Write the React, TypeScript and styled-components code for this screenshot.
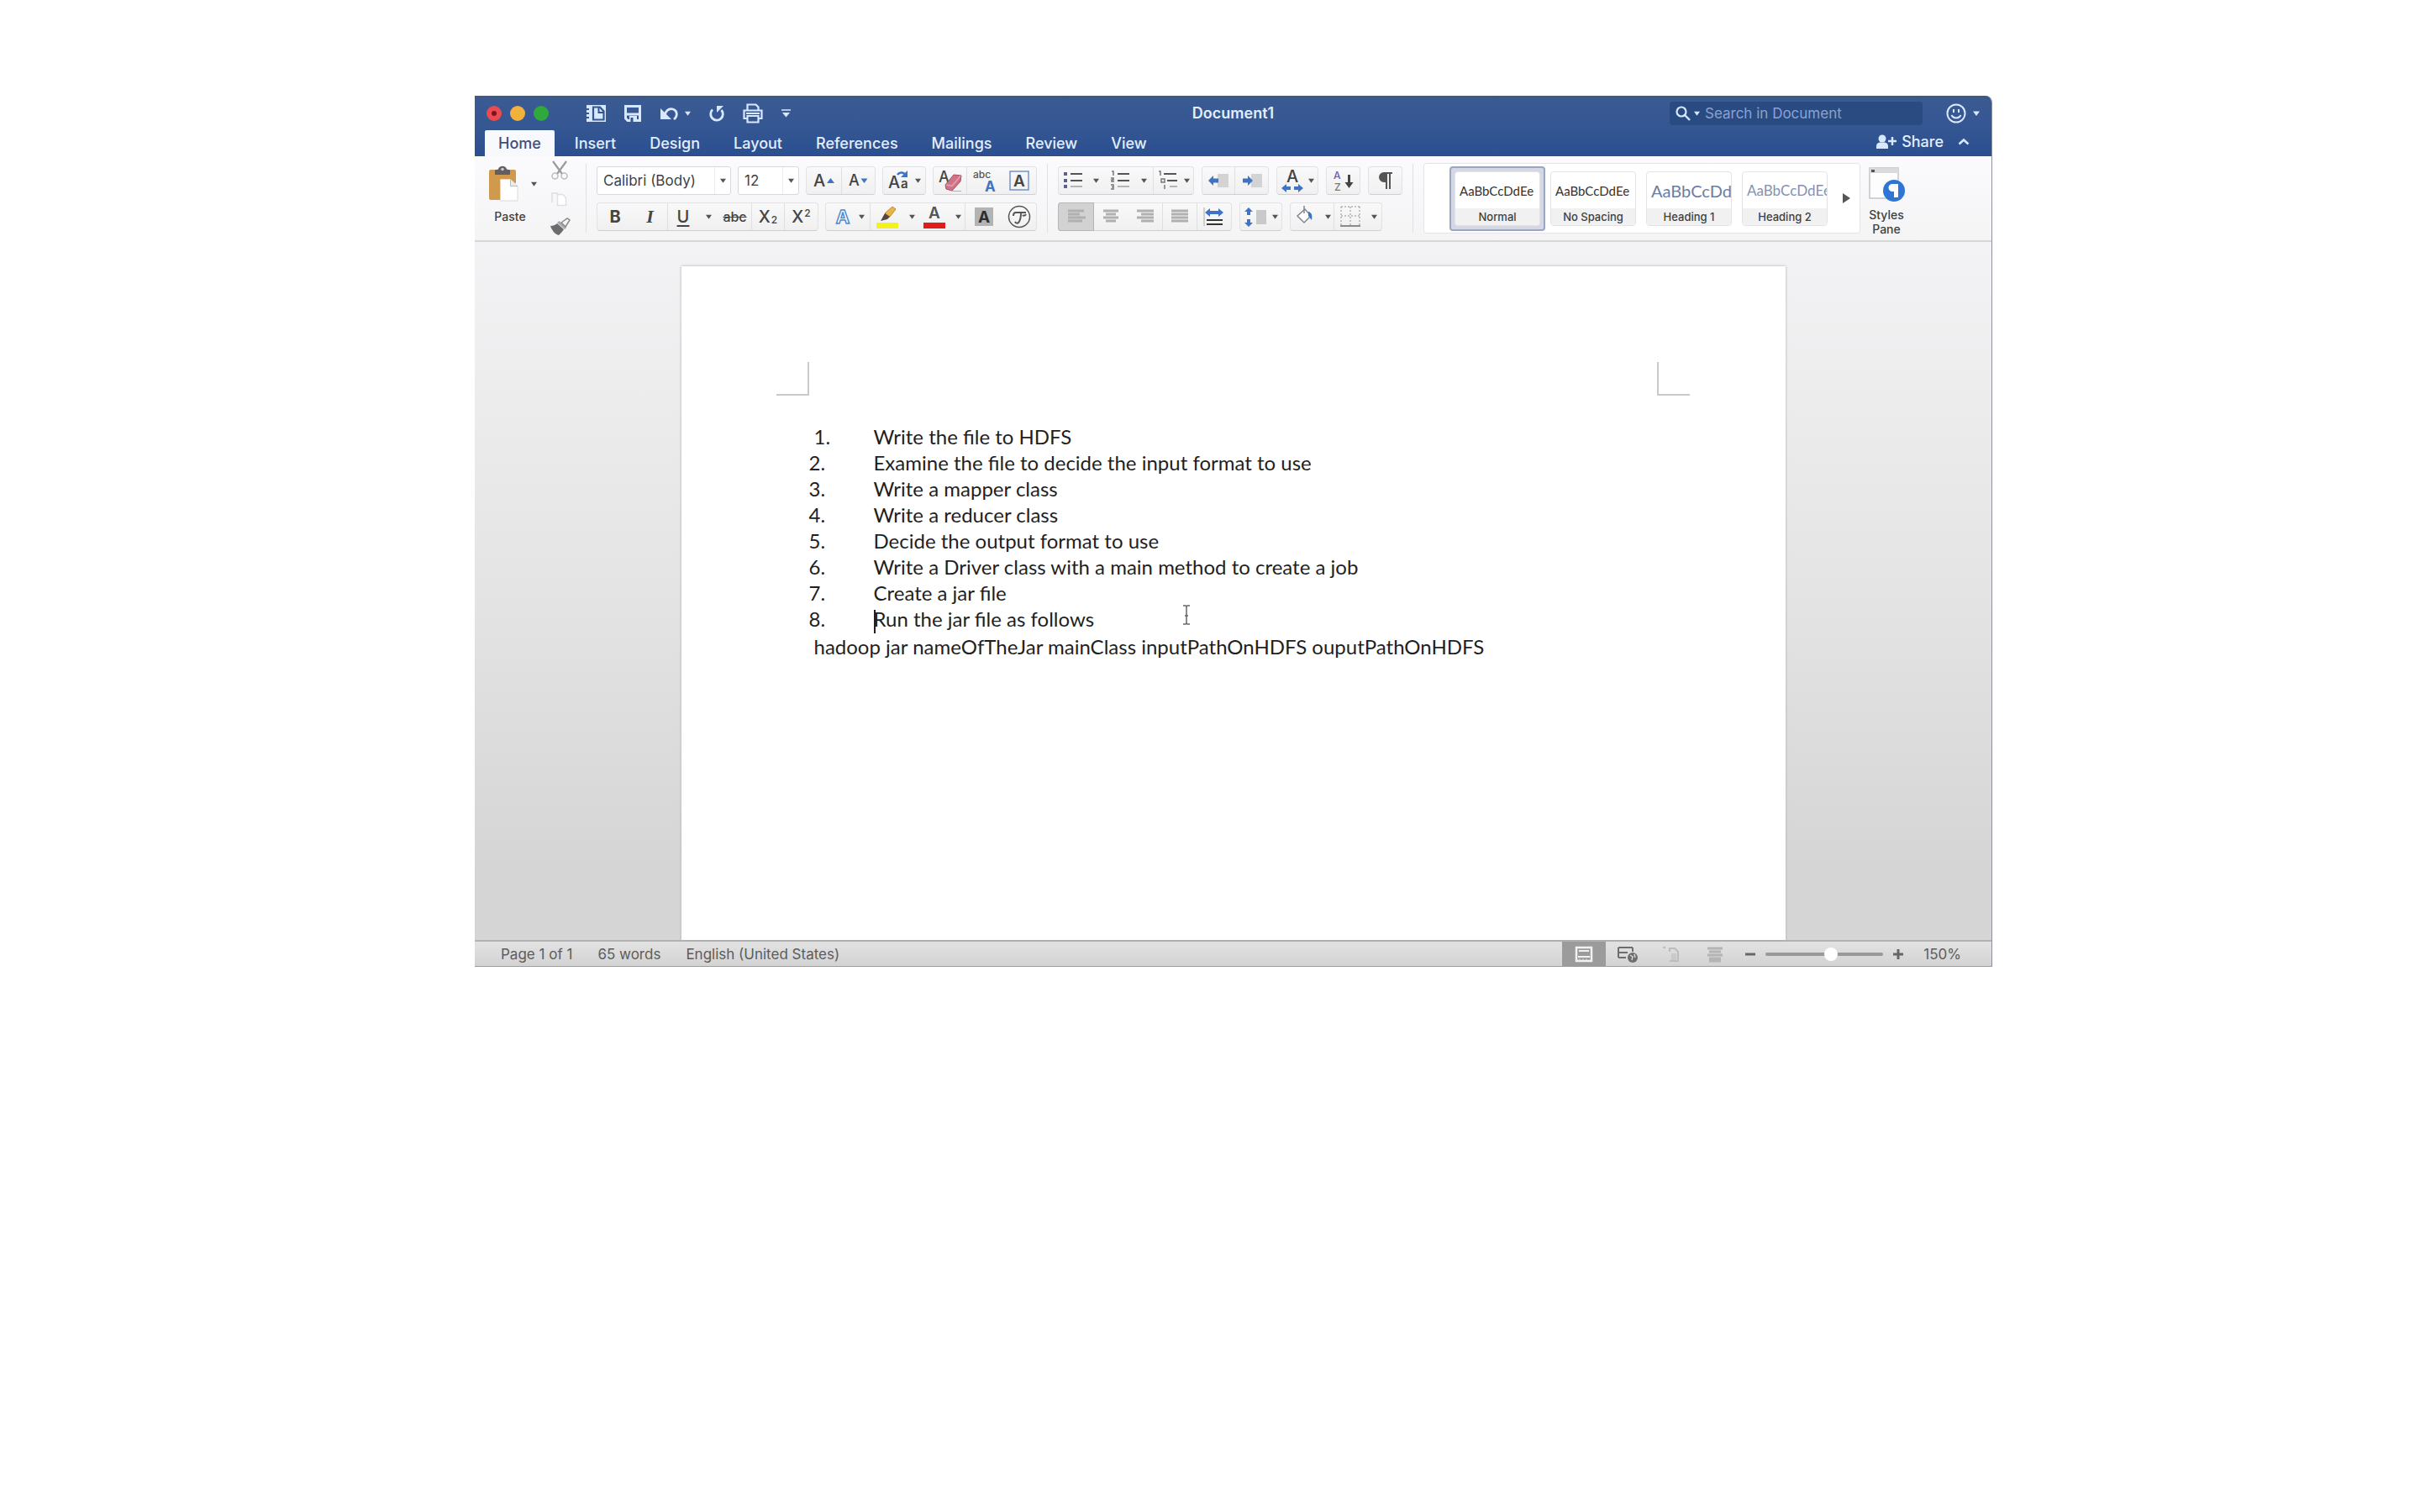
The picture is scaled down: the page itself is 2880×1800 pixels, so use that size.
import React from "react";
import styled, { createGlobalStyle, css } from "styled-components";

const ui = `Inter, "Liberation Sans", sans-serif`;
const body = `Lato, "Open Sans", sans-serif`;

const GlobalStyle = createGlobalStyle`
  * { box-sizing: border-box; }
  body { margin: 0; background: #fff; font-family: ${ui}; color: #3f3f3f; }
  button, input, select { font: inherit; color: inherit; margin: 0; padding: 0; border: 0; background: none; }
  svg { display: block; flex: none; overflow: visible; }
`;

const Desktop = styled.main`
  padding: 114px 509px 40px 565px;
`;

const Window = styled.section`
  display: flex;
  flex-direction: column;
  border-right: 1px solid #8d929b;
  border-top-right-radius: 8px;
  overflow: hidden;
`;

/* ---------- header ---------- */

const Header = styled.header`
  background: linear-gradient(#47576f 0, #3a5a93 4px, #345692 40px, #2a4e90 100%);
  color: #e3efff;
`;

const TitleRow = styled.div`
  display: grid;
  grid-template-columns: 1fr auto 1fr;
  align-items: center;
  height: 41px;
  padding: 0 14px;
`;

const Tools = styled.div<{ $gap: number; $end?: boolean }>`
  display: flex;
  align-items: center;
  gap: ${(p) => p.$gap}px;
  justify-content: ${(p) => (p.$end ? "flex-end" : "flex-start")};
`;

const Lights = styled.div`
  display: flex;
  gap: 10px;
  margin-right: 22px;
`;

const Light = styled.button<{ $color: string }>`
  display: grid;
  place-items: center;
  width: 18px;
  height: 18px;
  border-radius: 50%;
  background: ${(p) => p.$color};
`;

const LightDot = styled.span`
  width: 6px;
  height: 6px;
  border-radius: 50%;
  background: #7c1420;
`;

const GlyphButton = styled.button`
  display: flex;
  align-items: center;
  gap: 8px;
`;

const WindowTitle = styled.h1`
  margin: 0;
  font-size: 18px;
  line-height: 24px;
  font-weight: 600;
`;

const Search = styled.label`
  display: flex;
  align-items: center;
  gap: 4px;
  width: 301px;
  height: 28px;
  padding-left: 7px;
  border-radius: 4px;
  background: #2a4a82;
`;

const SearchInput = styled.input`
  flex: 1;
  min-width: 0;
  margin-left: 2px;
  outline: none;
  font-size: 17px;
  &::placeholder { color: #89a3d0; opacity: 1; }
`;

const TabRow = styled.nav`
  display: flex;
  align-items: stretch;
  height: 31px;
  gap: 8px;
  padding: 0 26px 0 12px;
`;

const Tab = styled.button<{ $active?: boolean }>`
  padding: 0 16px;
  font-size: 18px;
  line-height: 30px;
  font-weight: 500;
  ${(p) =>
    p.$active &&
    css`
      background: #f8f9fd;
      color: #3d4f80;
      border-radius: 2px 2px 0 0;
    `}
`;

const ShareArea = styled.div`
  display: flex;
  align-items: center;
  gap: 17px;
  margin-left: auto;
  padding-bottom: 4px;
`;

const ShareButton = styled.button`
  display: flex;
  align-items: center;
  gap: 6px;
  font-size: 18px;
  font-weight: 500;
`;

/* ---------- ribbon ---------- */

const Ribbon = styled.div`
  display: flex;
  align-items: center;
  height: 102px;
  padding-left: 12px;
  background: linear-gradient(#fbfbfe, #f4f4f5);
  border-bottom: 2px solid #d6d6d6;
`;

const PasteButton = styled.button`
  display: flex;
  flex-direction: column;
  align-items: center;
  gap: 9px;
  width: 60px;
  padding-bottom: 8px;
  font-size: 14px;
  line-height: 18px;
  font-weight: 500;
`;

const PasteIconRow = styled.span`
  display: flex;
  align-items: center;
  gap: 14px;
  padding-left: 6px;
`;

const ClipColumn = styled.div`
  display: flex;
  flex-direction: column;
  justify-content: space-between;
  height: 90px;
  margin: 0 6px 0 18px;
`;

const Divider = styled.span`
  width: 1px;
  height: 82px;
  margin: 0 12px;
  background: #e1e1e4;
`;

const Section = styled.div`
  display: flex;
  flex-direction: column;
  gap: 9px;
`;

const Row = styled.div<{ $gap?: number }>`
  display: flex;
  gap: ${(p) => p.$gap ?? 8}px;
`;

const Group = styled.div`
  display: flex;
  height: 34px;
  border: 1px solid #e2e2e4;
  border-bottom-color: #cfcfd1;
  border-radius: 4px;
  background: linear-gradient(#f9f9fa, #f0f0f1);
`;

const Key = styled.button<{ $w: number; $gap?: number; $on?: boolean; $line?: boolean }>`
  display: flex;
  align-items: center;
  justify-content: center;
  gap: ${(p) => p.$gap ?? 4}px;
  width: ${(p) => p.$w}px;
  font-size: 20px;
  line-height: 24px;
  color: #444;
  border-right: ${(p) => (p.$line ? "1px solid #e0e0e2" : "0")};
  ${(p) =>
    p.$on &&
    css`
      background: #d2d2d3;
      box-shadow: 0 0 0 1px #b5b5b7;
      border-radius: 3px 0 0 3px;
    `}
`;

const Glyph = styled.span<{ $bold?: boolean; $italic?: boolean; $line?: string; $size?: number }>`
  font-size: ${(p) => p.$size ?? 20}px;
  font-weight: ${(p) => (p.$bold ? 700 : 500)};
  font-style: ${(p) => (p.$italic ? "italic" : "normal")};
  font-family: ${(p) => (p.$italic ? `"Liberation Serif", serif` : ui)};
  text-decoration: ${(p) => p.$line ?? "none"};
  text-underline-offset: 3px;
`;

const Small = styled.span<{ $raise?: boolean }>`
  font-size: 12px;
  font-weight: 500;
  align-self: ${(p) => (p.$raise ? "flex-start" : "flex-end")};
`;

const Picker = styled.label<{ $w: number }>`
  display: grid;
  grid-template-columns: 1fr 19px;
  align-items: stretch;
  width: ${(p) => p.$w}px;
  height: 34px;
  border: 1px solid #d9d9dc;
  border-radius: 3px;
  background: #fff;
`;

const PickerSelect = styled.select`
  grid-area: 1 / 1 / 2 / 3;
  appearance: none;
  padding-left: 7px;
  font-size: 17px;
  outline: none;
`;

const PickerArrow = styled.span`
  grid-area: 1 / 2 / 2 / 3;
  display: grid;
  place-items: center;
  border-left: 1px solid #ebebed;
  pointer-events: none;
`;

const Gallery = styled.div`
  display: flex;
  align-items: center;
  width: 520px;
  height: 84px;
  padding-left: 30px;
  border: 1px solid #e4e4e6;
  border-radius: 4px;
  background: #fff;
`;

const StyleCard = styled.button<{ $on?: boolean }>`
  width: 114px;
  height: 77px;
  padding: ${(p) => (p.$on ? 4 : 6)}px;
  border-radius: 4px;
  ${(p) =>
    p.$on &&
    css`
      border: 2px solid #9ba7c1;
      background: #d3d8e4;
    `}
`;

const CardFace = styled.span`
  display: flex;
  flex-direction: column;
  height: 100%;
  overflow: hidden;
  border: 1px solid #e3e3e5;
  border-radius: 4px;
  background: #fff;
`;

const Sample = styled.span<{ $color: string; $size: number }>`
  display: block;
  height: 43px;
  padding-left: 5px;
  overflow: hidden;
  white-space: nowrap;
  text-align: left;
  line-height: 44px;
  font-family: ${body};
  font-size: ${(p) => p.$size}px;
  color: ${(p) => p.$color};
`;

const CardLabel = styled.span`
  flex: 1;
  background: #f1f1f2;
  font-size: 13px;
  line-height: 20px;
  font-weight: 500;
`;

const MoreStyles = styled.button`
  display: grid;
  place-items: center;
  flex: 1;
  align-self: stretch;
`;

const StylesPane = styled.button`
  display: flex;
  flex-direction: column;
  align-items: center;
  gap: 6px;
  width: 60px;
  padding-top: 8px;
  margin-left: 1px;
  font-size: 14px;
  line-height: 17px;
  font-weight: 500;
`;

/* ---------- document ---------- */

const Canvas = styled.div`
  display: flex;
  justify-content: center;
  padding: 29px 24px 0;
  background: linear-gradient(#f3f3f5, #e4e4e4 50%, #d5d5d5 90%);
`;

const Page = styled.article`
  position: relative;
  width: 100%;
  max-width: 1314px;
  min-height: 802px;
  padding: 114px 114px 0 113px;
  background: #fff;
  box-shadow: 0 0 3px #a9a9a9;
`;

const Corners = styled.div`
  display: flex;
  justify-content: space-between;
`;

const Corner = styled.span<{ $side: "left" | "right" }>`
  width: 39px;
  height: 40px;
  border-bottom: 2px solid #c9c9c9;
  ${(p) => (p.$side === "left" ? "border-right" : "border-left")}: 2px solid #c9c9c9;
`;

const Text = styled.div`
  padding: 33px 0 0 39px;
  font-family: ${body};
  font-size: 24px;
  line-height: 31px;
  color: #1f1f1f;
`;

const Steps = styled.ol`
  list-style: none;
  margin: 0;
  padding: 0;
`;

const Step = styled.li`
  display: grid;
  grid-template-columns: 77px 1fr;
`;

const StepNumber = styled.span<{ $indent?: boolean }>`
  padding-left: ${(p) => (p.$indent ? 6 : 0)}px;
`;

const Command = styled.p`
  margin: 0;
  padding-left: 6px;
`;

const TextCaret = styled.span`
  display: inline-block;
  width: 2px;
  height: 28px;
  margin-right: -2px;
  vertical-align: middle;
  background: #222;
`;

const Pointer = styled.svg`
  position: absolute;
  left: 595px;
  top: 403px;
`;

/* ---------- status bar ---------- */

const StatusBar = styled.footer`
  display: flex;
  align-items: center;
  height: 32px;
  padding: 0 36px 0 31px;
  border-top: 2px solid #b2b2b2;
  border-bottom: 1px solid #9d9d9d;
  background: linear-gradient(#e2e2e2, #d3d3d3);
  font-size: 17px;
  line-height: 24px;
  color: #5c5c5c;
`;

const StatusItems = styled.div`
  display: flex;
  gap: 30px;
  margin-right: auto;
`;

const ViewKey = styled.button<{ $on?: boolean }>`
  display: grid;
  place-items: center;
  width: 52px;
  height: 30px;
  background: ${(p) => (p.$on ? "#9b9b9b" : "transparent")};
`;

const Zoom = styled.div`
  display: flex;
  align-items: center;
  gap: 12px;
  margin-left: 10px;
`;

const ZoomRange = styled.input`
  appearance: none;
  width: 140px;
  height: 16px;
  &::-webkit-slider-runnable-track { height: 4px; border-radius: 2px; background: #999; }
  &::-webkit-slider-thumb {
    appearance: none;
    width: 16px;
    height: 16px;
    margin-top: -6px;
    border-radius: 50%;
    background: #fff;
  }
`;

const ZoomValue = styled.output`
  margin-left: 12px;
`;

/* ---------- drawings ---------- */

const Caret = ({ color = "#555", size = 7 }: { color?: string; size?: number }) => (
  <svg width={size} height="6" viewBox="0 0 8 6"><path d="M0 .5h8L4 6z" fill={color} /></svg>
);

const Icon = ({ children, w = 26, h = 26 }: { children: React.ReactNode; w?: number; h?: number }) => (
  <svg width={w} height={h} viewBox={`0 0 ${w} ${h}`} fill="none" aria-hidden="true" fontFamily={ui}>{children}</svg>
);

const light = "#d7e8ff";
const blue = "#3f74c4";

const SidebarIcon = () => (
  <Icon w={24} h={20}>
    <path d="M1 0h23v20H1z" fill={light} />
    <path d="M1 5h3M1 10h3M1 15h3" stroke="#34568f" strokeWidth="2" />
    <path d="M9 2.500h8l4.500 5v10H9z" fill={light} stroke="#34568f" strokeWidth="2.200" /><path d="M15.500 3v6h6" stroke="#34568f" strokeWidth="2" />
  </Icon>
);
const SaveIcon = () => (
  <Icon w={20} h={20}>
    <path d="M1.500 1.500h17v17H4l-2.500-2.500z" stroke={light} strokeWidth="3" /><path d="M2 11h16" stroke={light} strokeWidth="3" />
    <path d="M6 13h9v6H6z" fill={light} /><path d="M7.500 15h3v5h-3z" fill="#34568f" />
  </Icon>
);
const UndoIcon = () => (
  <Icon w={22} h={18}>
    <path d="M1 3v13h13z" fill={light} /><path d="M6 11c2-6 6-8 10-7 5 1.500 6 8 1 12" stroke={light} strokeWidth="2.800" />
  </Icon>
);
const RedoIcon = () => (
  <Icon w={18} h={20}>
    <path d="M4 5.500A7.300 7.300 0 1 0 14.500 6" stroke={light} strokeWidth="2.800" /><path d="M9 1h8l-8 8z" fill={light} />
  </Icon>
);
const PrintIcon = () => (
  <Icon w={24} h={24}>
    <path d="M5.500 8V1.500h10l3 3V8M5 18H1.500V8.500h21V18H19" stroke={light} strokeWidth="2.200" />
    <path d="M5.500 15h13v7.500h-13zM4 12h16" stroke={light} strokeWidth="2.200" />
  </Icon>
);
const ToolbarMenuIcon = () => (
  <Icon w={11} h={10}><path d="M0 1h11" stroke={light} strokeWidth="1.500" /><path d="M1 4h9l-4.500 5.500z" fill={light} /></Icon>
);
const SearchIcon = () => (
  <Icon w={18} h={18}><circle cx="7" cy="7" r="5.500" stroke={light} strokeWidth="2.200" /><path d="m11 11 6 6" stroke={light} strokeWidth="2.400" /></Icon>
);
const SmileIcon = () => (
  <Icon w={24} h={24}>
    <circle cx="12" cy="12" r="10.500" stroke={light} strokeWidth="2" />
    <path d="M9 7v4M15 7v4M6.500 14c2 4.500 9 4.500 11 0" stroke={light} strokeWidth="2" />
  </Icon>
);
const ShareIcon = () => (
  <Icon w={24} h={18}>
    <circle cx="7" cy="5" r="4.500" fill={light} /><path d="M0 17v-3c0-3 2-4 4-4.500h6c2 .5 4 1.500 4 4.500v3z" fill={light} />
    <path d="M19 3v10M14 8h10" stroke={light} strokeWidth="2.400" />
  </Icon>
);
const ChevronIcon = () => (
  <Icon w={14} h={9}><path d="m1.500 7.500 5.500-5 5.500 5" stroke={light} strokeWidth="2.600" /></Icon>
);

const PasteIcon = () => (
  <Icon w={36} h={43}>
    <path d="M2 5h28a2 2 0 0 1 2 2v14H14v20H2a2 2 0 0 1-2-2V7a2 2 0 0 1 2-2z" fill="#cf9a4d" />
    <path d="M7 11V5.500l4-1C12-.5 20-.5 21 4.500l4 1V11z" fill="#625d62" /><circle cx="16" cy="4.500" r="1.800" fill="#cfc9c2" />
    <path d="M13.500 16.500h12l8.500 8V42H13.500z" fill="#fff" stroke="#dcd8d3" /><path d="M25.500 16.500v8H34" fill="#ececec" stroke="#b9b9b9" />
  </Icon>
);
const CutIcon = () => (
  <Icon w={22} h={24}>
    <path d="M3 1l11 15M19 1 8 16" stroke="#9b9b9e" strokeWidth="2.200" />
    <circle cx="5.500" cy="18.500" r="3.500" stroke="#bcbcc0" strokeWidth="1.500" /><circle cx="16.500" cy="18.500" r="3.500" stroke="#bcbcc0" strokeWidth="1.500" />
  </Icon>
);
const CopyIcon = () => (
  <Icon w={22} h={20}>
    <path d="M2 14V3h7" stroke="#dddde0" strokeWidth="1.500" /><path d="M8.500 4.500h6l4 4v9h-10z" fill="#fff" stroke="#e0e0e3" strokeWidth="1.500" />
  </Icon>
);
const BrushIcon = () => (
  <Icon w={24} h={22}>
    <path d="M0 10c3 0 6-1 8-3l8 7c-2 3-4 5-6 7-4-1-8-5-10-11z" fill="#6c6c6e" /><path d="M8 6l9 8 2-2-8.500-8z" fill="#a9a9ab" />
    <path d="M13 6l7-5 3 2-5 8z" fill="#f4f4f4" stroke="#8a8a8d" strokeWidth="1.500" />
  </Icon>
);

const CaseIcon = () => (
  <Icon>
    <text x="0" y="22" fontSize="20" fontWeight="500" fill="#444">A</text><text x="15" y="22" fontSize="15" fontWeight="600" fill="#444">a</text>
    <path d="M11 6c3-4 8-3 10 1" stroke={blue} strokeWidth="2.500" /><path d="M15 9h8V1z" fill={blue} />
  </Icon>
);
const ClearIcon = () => (
  <Icon>
    <text x="-1" y="15" fontSize="18" fontWeight="500" fill="#444">A</text>
    <path d="M7 18 17 6l9 1-1 7-10 11-7-2z" fill="#cf7387" stroke="#a94e66" /><path d="m8 18 7 1.500 10-12" stroke="#e6a3b2" strokeWidth="1.500" /><path d="M15 25.500h11" stroke="#c8a8b0" />
  </Icon>
);
const PhoneticIcon = () => (
  <Icon>
    <text x="-1" y="10" fontSize="12" fontWeight="500" fill="#555">abc</text><text x="13" y="26" fontSize="17" fontWeight="700" fill={blue}>A</text>
  </Icon>
);
const BoxedIcon = () => (
  <Icon><path d="M2 2h22v22H2z" stroke="#6f94cf" strokeWidth="1.500" /><text x="13" y="20" fontSize="19" fontWeight="600" textAnchor="middle" fill="#444">A</text></Icon>
);
const OutlineAIcon = () => (
  <Icon><text x="13" y="21" fontSize="22" fontWeight="700" textAnchor="middle" fill="#fff" stroke="#4f8bd0" strokeWidth="1.500">A</text></Icon>
);
const HighlightIcon = () => (
  <Icon>
    <path d="M0 20h26v7H0z" fill="#f4f21c" /><path d="m10 9 9-8 4 3-7 9z" fill="#e9b548" stroke="#b98a2e" /><path d="m10 9 6 4-3 3-8 2z" fill="#54463a" />
  </Icon>
);
const FontColorIcon = () => (
  <Icon><text x="13" y="15" fontSize="19" fontWeight="600" textAnchor="middle" fill="#555">A</text><path d="M0 20h26v7H0z" fill="#e01b1b" /></Icon>
);
const ShadedAIcon = () => (
  <Icon><path d="M2 2h22v22H2z" fill="#b3b3b4" /><text x="13" y="20" fontSize="19" fontWeight="700" textAnchor="middle" fill="#2e2e2e">A</text></Icon>
);
const EncloseIcon = () => (
  <Icon><circle cx="13" cy="13" r="12.500" stroke="#555" strokeWidth="1.500" /><path d="M6 12c0-3 1-4 3-4h12M15 8c0 6-1 10-3 12-1 1-3 1-4-1M17 11c1 1 3 1 4-1" stroke="#555" strokeWidth="2" /></Icon>
);
const BulletsIcon = () => (
  <Icon>
    <path d="M2 3h4v4H2zM2 11h4v4H2zM2 18h4v4H2z" fill="#5d5f8f" /><path d="M10 5h14M10 13h14" stroke="#555" strokeWidth="2" /><path d="M10 20h14" stroke="#b5b5b5" strokeWidth="2" />
  </Icon>
);
const NumbersIcon = () => (
  <Icon>
    <path d="M3 2h2v5M2 10h3v2H3v2h3M2 18h3v5H2M3 20.500h2" stroke="#777" strokeWidth="1.500" />
    <path d="M10 5h14M10 13h14" stroke="#555" strokeWidth="2" /><path d="M10 20h14" stroke="#b5b5b5" strokeWidth="2" />
  </Icon>
);
const MultilevelIcon = () => (
  <Icon>
    <path d="M1 2h2v5M4 11h4v4H4zM8 18v5" stroke="#777" strokeWidth="1.500" />
    <path d="M7 5h15M11 13h12" stroke="#555" strokeWidth="2" /><path d="M14 20h9" stroke="#b5b5b5" strokeWidth="2" />
  </Icon>
);
const IndentIcon = ({ inward }: { inward?: boolean }) => (
  <Icon>
    <path d="M12 5h13v16H12z" fill="#d3d3d5" />
    <path d={inward ? "M14 13 8 7v3.500H2v5h6V19z" : "M1 13l6-6v3.500h6v5H7V19z"} fill={blue} />
  </Icon>
);
const TextScaleIcon = () => (
  <Icon>
    <text x="13" y="15" fontSize="20" fontWeight="500" textAnchor="middle" fill="#444">A</text>
    <path d="m0 22 6-5v3h5v4H6v3zM26 22l-6-5v3h-5v4h5v3z" fill={blue} />
  </Icon>
);
const SortIcon = () => (
  <Icon>
    <text x="1" y="11" fontSize="12" fontWeight="500" fill="#6a62a0">A</text><text x="2" y="25" fontSize="12" fontWeight="500" fill="#777">Z</text>
    <path d="M18 6h3v9h3.500L19.500 22l-5-7H18z" fill="#444" />
  </Icon>
);
const PilcrowIcon = () => (
  <Icon><path d="M21 3H11a6 6 0 0 0 0 12h2v8h2V5h2v18h2V5h2z" fill="#555" /></Icon>
);
const AlignIcon = ({ rows }: { rows: [number, number][] }) => (
  <Icon>{rows.map(([x, w], i) => <path key={i} d={`M${x} ${6 + i * 4}h${w}`} stroke="#b0b0b2" strokeWidth="3" />)}</Icon>
);
const DistributeIcon = () => (
  <Icon>
    <path d="M1 2v22" stroke="#aaa" /><path d="m2 8 6-5v3h10V3l6 5-6 5v-3H8v3z" fill={blue} />
    <path d="M4 17h19M4 22h19" stroke="#333" strokeWidth="2" />
  </Icon>
);
const SpacingIcon = () => (
  <Icon>
    <path d="m5 2 5 5H7v4H3V7H0zM5 25l5-5H7v-4H3v4H0z" fill={blue} /><path d="M14 5h12v17H14z" fill="#c9c9cb" />
  </Icon>
);
const BucketIcon = () => (
  <Icon><path d="M4 12 13 4l7 8-8 8z" fill="#fff" stroke="#7f8794" strokeWidth="1.500" /><path d="M12 9V0" stroke="#7f8794" strokeWidth="1.500" /><path d="M17 7c4 1 5 4 4 10l-4-5z" fill={blue} /></Icon>
);
const BordersIcon = () => (
  <Icon>
    <path d="M2 1h22M2 12h22M2 1v22M13 1v22M24 1v22" stroke="#b3b3b5" strokeDasharray="2 2" strokeWidth="1.500" /><path d="M1 24h24" stroke="#8c8c8e" strokeWidth="2" />
  </Icon>
);
const StylesPaneIcon = () => (
  <Icon w={43} h={42}>
    <path d="M1 1h34v36H1z" fill="#fdfdfe" stroke="#c4c4c8" strokeWidth="1.500" /><path d="M1 1h34v6H1z" fill="#dadadc" /><path d="M3 3h4v3H3z" fill="#555" />
    <circle cx="30" cy="28" r="13" fill="#2f75d6" /><path d="M35 20h-7a4.500 4.500 0 0 0 0 9h2v7h5z" fill="#fff" />
  </Icon>
);

const PrintViewIcon = () => (
  <Icon w={22} h={20}><path d="M2 2h18v16H2z" stroke="#f1f1f1" strokeWidth="2.500" /><path d="M5 6h12M4 13h14" stroke="#f1f1f1" strokeWidth="2" /><path d="M6 15v2M10 15v2M14 15v2" stroke="#d8d8d8" /></Icon>
);
const WebViewIcon = () => (
  <Icon w={24} h={20}>
    <path d="M1 2h17M1 8h11M1 2v12M1 14h9M18 2v5" stroke="#6d6d6d" strokeWidth="2" /><circle cx="18" cy="14" r="6" fill="#6d6d6d" /><path d="M15 11l3 2-1 4M20 10l1 4" stroke="#d8d8d8" strokeWidth="1.500" />
  </Icon>
);
const OutlineViewIcon = () => (
  <Icon w={20} h={20}><path d="M0 2h3M7 3h7l4 4v11H8M8 3v4" stroke="#bdbdbd" strokeWidth="2" /><path d="M10 9h6v8h-6z" fill="#cacaca" /></Icon>
);
const DraftViewIcon = () => (
  <Icon w={20} h={20}><path d="M1 3h18M3 7h14M1 11h18M3 15h14M3 18h14" stroke="#b4b4b4" strokeWidth="3" /></Icon>
);

/* ---------- data ---------- */

const tabs = ["Home", "Insert", "Design", "Layout", "References", "Mailings", "Review", "View"];

const steps = [
  "Write the file to HDFS",
  "Examine the file to decide the input format to use",
  "Write a mapper class",
  "Write a reducer class",
  "Decide the output format to use",
  "Write a Driver class with a main method to create a job",
  "Create a jar file",
  "Run the jar file as follows",
];

const styleCards = [
  { name: "Normal", color: "#333", size: 15 },
  { name: "No Spacing", color: "#333", size: 15 },
  { name: "Heading 1", color: "#6b7da3", size: 20 },
  { name: "Heading 2", color: "#8391b3", size: 17 },
];

const alignments: { name: string; w: number; rows: [number, number][] }[] = [
  { name: "Align left", w: 41, rows: [[3, 19], [3, 14], [3, 21], [3, 17]] },
  { name: "Center", w: 42, rows: [[4, 18], [7, 12], [4, 18], [7, 12]] },
  { name: "Align right", w: 41, rows: [[3, 20], [8, 15], [3, 20], [8, 15]] },
  { name: "Justify", w: 41, rows: [[3, 20], [3, 20], [3, 20], [3, 20]] },
];

export default function App() {
  return (
    <>
      <GlobalStyle />
      <Desktop>
        <Window>
          <Header>
            <TitleRow>
              <Tools $gap={22}>
                <Lights>
                  <Light $color="#ea4b50" aria-label="Close"><LightDot /></Light>
                  <Light $color="#f2b13c" aria-label="Minimize" />
                  <Light $color="#2fa83c" aria-label="Full screen" />
                </Lights>
                <Tools $gap={22}>
                  <GlyphButton aria-label="Sidebar"><SidebarIcon /></GlyphButton>
                  <GlyphButton aria-label="Save"><SaveIcon /></GlyphButton>
                  <GlyphButton aria-label="Undo"><UndoIcon /><Caret color={light} /></GlyphButton>
                  <GlyphButton aria-label="Redo"><RedoIcon /></GlyphButton>
                  <GlyphButton aria-label="Print"><PrintIcon /></GlyphButton>
                </Tools>
                <GlyphButton aria-label="Customize toolbar"><ToolbarMenuIcon /></GlyphButton>
              </Tools>
              <WindowTitle>Document1</WindowTitle>
              <Tools $gap={28} $end>
                <Search>
                  <SearchIcon />
                  <Caret color={light} />
                  <SearchInput type="search" aria-label="Search in Document" placeholder="Search in Document" />
                </Search>
                <GlyphButton aria-label="Feedback"><SmileIcon /><Caret color={light} size={8} /></GlyphButton>
              </Tools>
            </TitleRow>
            <TabRow>
              {tabs.map((t, i) => <Tab key={t} $active={i === 0}>{t}</Tab>)}
              <ShareArea>
                <ShareButton><ShareIcon />Share</ShareButton>
                <GlyphButton aria-label="Collapse ribbon"><ChevronIcon /></GlyphButton>
              </ShareArea>
            </TabRow>
          </Header>

          <Ribbon>
            <PasteButton>
              <PasteIconRow><PasteIcon /><Caret /></PasteIconRow>
              Paste
            </PasteButton>
            <ClipColumn>
              <GlyphButton aria-label="Cut"><CutIcon /></GlyphButton>
              <GlyphButton aria-label="Copy"><CopyIcon /></GlyphButton>
              <GlyphButton aria-label="Format painter"><BrushIcon /></GlyphButton>
            </ClipColumn>
            <Divider />

            <Section>
              <Row>
                <Picker $w={160}>
                  <PickerSelect aria-label="Font"><option>Calibri (Body)</option></PickerSelect>
                  <PickerArrow><Caret /></PickerArrow>
                </Picker>
                <Picker $w={73}>
                  <PickerSelect aria-label="Font size"><option>12</option></PickerSelect>
                  <PickerArrow><Caret /></PickerArrow>
                </Picker>
                <Group>
                  <Key $w={42} $gap={2} $line aria-label="Increase font size"><Glyph>A</Glyph><Icon w={9} h={6}><path d="M0 6h9L4.500 0z" fill={blue} /></Icon></Key>
                  <Key $w={39} $gap={1} aria-label="Decrease font size"><Glyph $size={18}>A</Glyph><Caret color={blue} size={9} /></Key>
                </Group>
                <Group><Key $w={50} $gap={6} aria-label="Change case"><CaseIcon /><Caret /></Key></Group>
                <Group>
                  <Key $w={40} $line aria-label="Clear formatting"><ClearIcon /></Key>
                  <Key $w={41} aria-label="Phonetic guide"><PhoneticIcon /></Key>
                  <Key $w={41} aria-label="Character border"><BoxedIcon /></Key>
                </Group>
              </Row>
              <Row>
                <Group>
                  <Key $w={42}><Glyph $bold>B</Glyph></Key>
                  <Key $w={42} $line><Glyph $bold $italic $size={22}>I</Glyph></Key>
                  <Key $w={36}><Glyph $line="underline">U</Glyph></Key>
                  <Key $w={24} aria-label="Underline options"><Caret /></Key>
                  <Key $w={40} $line><Glyph $line="line-through" $size={16}>abc</Glyph></Key>
                  <Key $w={39} $gap={1} $line><Glyph>X</Glyph><Small>2</Small></Key>
                  <Key $w={39} $gap={1}><Glyph>X</Glyph><Small $raise>2</Small></Key>
                </Group>
                <Group>
                  <Key $w={53} $gap={6} $line aria-label="Text effects"><OutlineAIcon /><Caret /></Key>
                  <Key $w={59} $gap={13} aria-label="Highlight"><HighlightIcon /><Caret /></Key>
                  <Key $w={54} $gap={12} $line aria-label="Font color"><FontColorIcon /><Caret /></Key>
                  <Key $w={43} aria-label="Character shading"><ShadedAIcon /></Key>
                  <Key $w={41} aria-label="Enclose characters"><EncloseIcon /></Key>
                </Group>
              </Row>
            </Section>
            <Divider />

            <Section>
              <Row $gap={9}>
                <Group>
                  <Key $w={52} $gap={11} aria-label="Bullets"><BulletsIcon /><Caret /></Key>
                  <Key $w={61} $gap={12} $line aria-label="Numbering"><NumbersIcon /><Caret /></Key>
                  <Key $w={47} $gap={5} aria-label="Multilevel list"><MultilevelIcon /><Caret /></Key>
                </Group>
                <Group>
                  <Key $w={39} $line aria-label="Decrease indent"><IndentIcon /></Key>
                  <Key $w={39} aria-label="Increase indent"><IndentIcon inward /></Key>
                </Group>
                <Group><Key $w={48} $gap={6} aria-label="Asian layout"><TextScaleIcon /><Caret /></Key></Group>
                <Group><Key $w={39} aria-label="Sort"><SortIcon /></Key></Group>
                <Group><Key $w={39} aria-label="Show paragraph marks"><PilcrowIcon /></Key></Group>
              </Row>
              <Row $gap={9}>
                <Group>
                  {alignments.map((a, i) => (
                    <Key key={a.name} $w={a.w} $on={i === 0} $line={i > 1} aria-label={a.name}><AlignIcon rows={a.rows} /></Key>
                  ))}
                  <Key $w={40} aria-label="Distribute"><DistributeIcon /></Key>
                </Group>
                <Group><Key $w={49} $gap={7} aria-label="Line spacing"><SpacingIcon /><Caret /></Key></Group>
                <Group>
                  <Key $w={52} $gap={11} $line aria-label="Shading"><BucketIcon /><Caret /></Key>
                  <Key $w={56} $gap={12} aria-label="Borders"><BordersIcon /><Caret /></Key>
                </Group>
              </Row>
            </Section>
            <Divider />

            <Gallery>
              {styleCards.map((s, i) => (
                <StyleCard key={s.name} $on={i === 0}>
                  <CardFace>
                    <Sample $color={s.color} $size={s.size}>AaBbCcDdEe</Sample>
                    <CardLabel>{s.name}</CardLabel>
                  </CardFace>
                </StyleCard>
              ))}
              <MoreStyles aria-label="More styles"><Icon w={9} h={12}><path d="M0 0v12l9-6z" fill="#555" /></Icon></MoreStyles>
            </Gallery>
            <StylesPane><StylesPaneIcon />Styles Pane</StylesPane>
          </Ribbon>

          <Canvas>
            <Page>
              <Corners><Corner $side="left" /><Corner $side="right" /></Corners>
              <Text>
                <Steps>
                  {steps.map((s, i) => (
                    <Step key={s}>
                      <StepNumber $indent={i === 0}>{i + 1}.</StepNumber>
                      <span>{i === 7 && <TextCaret />}{s}</span>
                    </Step>
                  ))}
                </Steps>
                <Command>hadoop jar nameOfTheJar mainClass inputPathOnHDFS ouputPathOnHDFS</Command>
              </Text>
              <Pointer width="12" height="24" viewBox="0 0 12 24" fill="none" aria-hidden="true">
                <path d="M2 1h3l1 1 1-1h3M2 23h3l1-1 1 1h3M6 2v20M4 13h4" stroke="#666" strokeWidth="1.500" />
              </Pointer>
            </Page>
          </Canvas>

          <StatusBar>
            <StatusItems><span>Page 1 of 1</span><span>65 words</span><span>English (United States)</span></StatusItems>
            <ViewKey $on aria-label="Print layout"><PrintViewIcon /></ViewKey>
            <ViewKey aria-label="Web layout"><WebViewIcon /></ViewKey>
            <ViewKey aria-label="Outline"><OutlineViewIcon /></ViewKey>
            <ViewKey aria-label="Draft"><DraftViewIcon /></ViewKey>
            <Zoom>
              <GlyphButton aria-label="Zoom out"><Icon w={12} h={12}><path d="M0 6h12" stroke="#666" strokeWidth="3" /></Icon></GlyphButton>
              <ZoomRange type="range" min={0} max={100} defaultValue={56} aria-label="Zoom" />
              <GlyphButton aria-label="Zoom in"><Icon w={12} h={12}><path d="M0 6h12M6 0v12" stroke="#666" strokeWidth="3" /></Icon></GlyphButton>
              <ZoomValue>150%</ZoomValue>
            </Zoom>
          </StatusBar>
        </Window>
      </Desktop>
    </>
  );
}
